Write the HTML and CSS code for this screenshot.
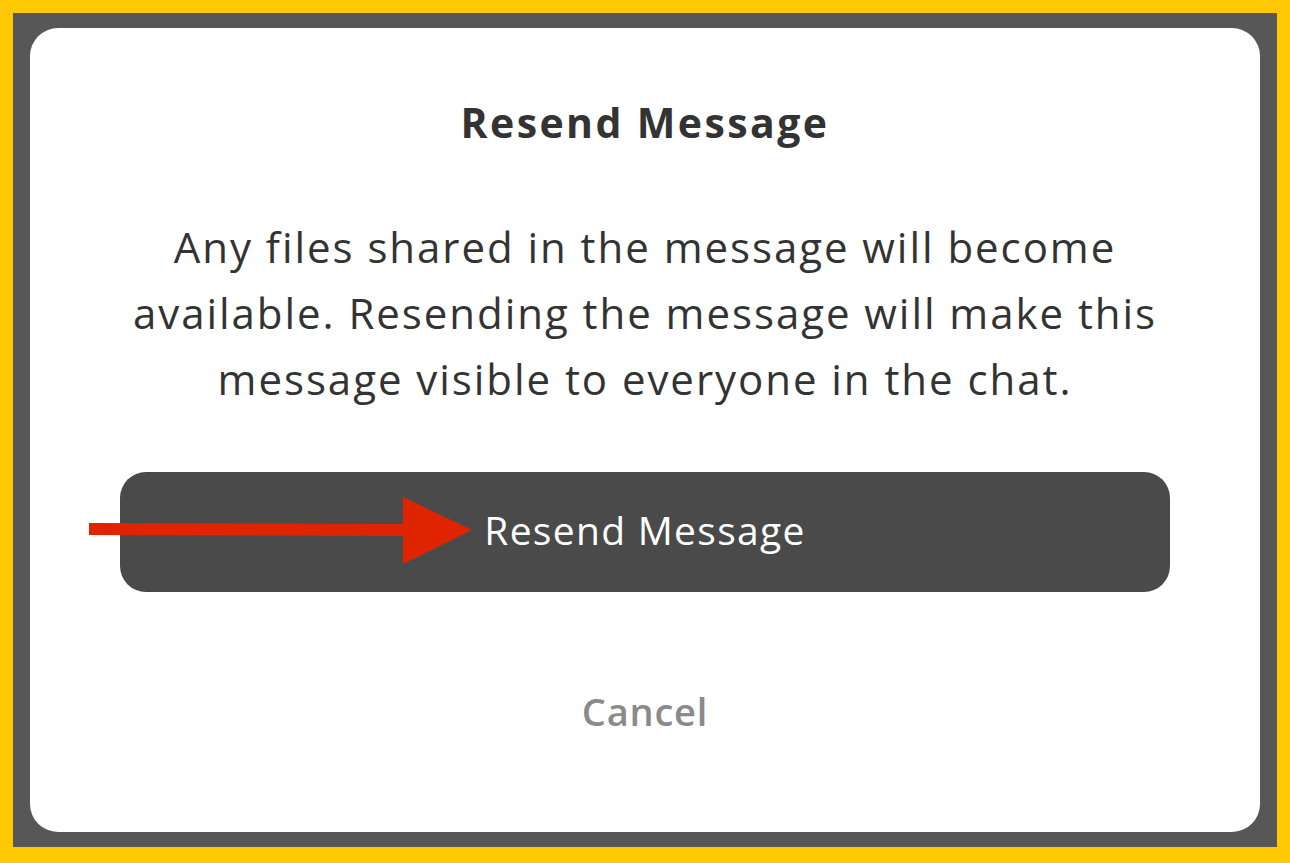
FILE: index.html
```html
<!DOCTYPE html>
<html>
<head>
<meta charset="utf-8">
<link rel="stylesheet" href="styles.css">
</head>
<body>
<div class="frame">
  <div class="dialog">
    <h1 class="title">Resend Message</h1>
    <p class="body-text">Any files shared in the message will become available. Resending the message will make this message visible to everyone in the chat.</p>
    <button class="primary">Resend Message</button>
    <button class="cancel">Cancel</button>
  </div>
  <svg class="arrow" width="383" height="67" viewBox="0 0 383 67">
    <polygon points="0,26 314,27 314,0 383,33 314,67 314,39 0,38" fill="#e02400"/>
  </svg>
</div>
</body>
</html>
```
FILE: styles.css
```css
html, body {
  margin: 0;
  padding: 0;
}
body {
  width: 1290px;
  height: 863px;
  overflow: hidden;
  font-family: "Open Sans", "Noto Sans", sans-serif;
}
.frame {
  position: relative;
  box-sizing: border-box;
  width: 1290px;
  height: 863px;
  border: 13px solid #ffc800;
  border-bottom-width: 16px;
  background: #575757;
  padding: 15px 17px;
  display: flex;
}
.dialog {
  flex: 1;
  min-width: 0;
  background: #fff;
  border-radius: 28px;
  display: flex;
  flex-direction: column;
  align-items: center;
  padding: 68px 90px 0;
}
.title {
  margin: 0;
  font-size: 41px;
  line-height: 52px;
  font-weight: 700;
  letter-spacing: 2.4px;
  color: #333;
}
.body-text {
  margin: 66px -10px 0;
  align-self: stretch;
  font-size: 42px;
  line-height: 66px;
  letter-spacing: 1.95px;
  color: #333;
  text-align: center;
}
.primary {
  margin-top: 60px;
  width: 100%;
  height: 120px;
  padding: 0 0 6px;
  border: none;
  border-radius: 26px;
  background: #4a4a4a;
  color: #fff;
  font-family: inherit;
  font-size: 39px;
  font-weight: 500;
  letter-spacing: 1.3px;
}
.cancel {
  margin-top: 93px;
  border: none;
  background: none;
  padding: 0;
  font-family: inherit;
  font-size: 38px;
  line-height: 52px;
  font-weight: 600;
  letter-spacing: 0.8px;
  color: #8a8a8a;
}
.arrow {
  position: absolute;
  left: 76px;
  top: 484px;
}
```
